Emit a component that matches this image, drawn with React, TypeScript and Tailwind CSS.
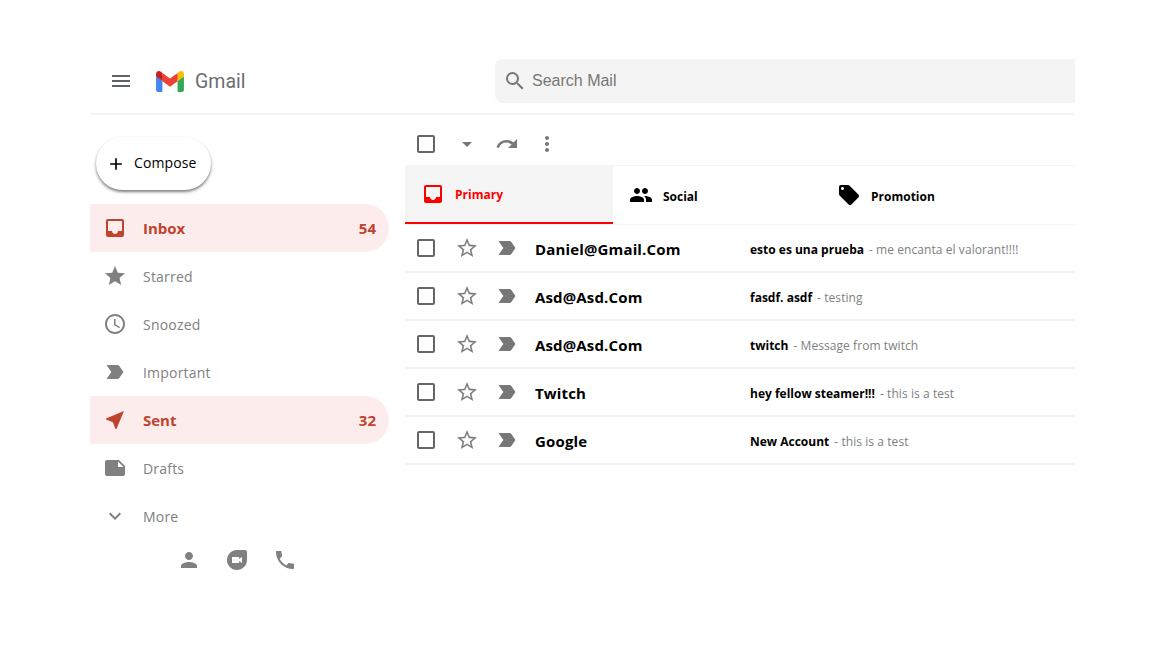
import type { ReactNode } from "react"
import {
  MdAccessTime,
  MdAdd,
  MdArrowDropDown,
  MdCheckBoxOutlineBlank,
  MdDuo,
  MdExpandMore,
  MdInbox,
  MdLabelImportant,
  MdLocalOffer,
  MdMenu,
  MdMoreVert,
  MdNearMe,
  MdNote,
  MdPeople,
  MdPerson,
  MdPhone,
  MdRedo,
  MdSearch,
  MdStar,
  MdStarBorder,
} from "react-icons/md"

function GmailLogo() {
  return (
    <svg viewBox="0 0 256 193" className="h-[21px] w-[28px]">
      <path fill="#4285F4" d="M58.182 192.05V93.14L27.507 65.077 0 49.504v125.091c0 9.658 7.825 17.455 17.455 17.455h40.727Z" />
      <path fill="#34A853" d="M197.818 192.05h40.727c9.659 0 17.455-7.826 17.455-17.455V49.505l-31.156 17.837-27.026 25.798v98.91Z" />
      <path fill="#EA4335" d="m58.182 93.14-4.174-38.647 4.174-36.989L128 69.868l69.818-52.364 4.669 34.992-4.669 40.644L128 145.504z" />
      <path fill="#FBBC04" d="M197.818 17.504V93.14L256 49.504V26.231c0-21.585-24.64-33.89-41.89-20.945l-16.292 12.218Z" />
      <path fill="#C5221F" d="M0 49.504l26.759 20.07L58.182 93.14V17.504L41.89 5.286C24.61-7.66 0 4.646 0 26.23v23.273Z" />
    </svg>
  )
}

type NavItem = { icon: ReactNode; label: string; count?: number; active?: boolean }

const navItems: NavItem[] = [
  { icon: <MdInbox />, label: "Inbox", count: 54, active: true },
  { icon: <MdStar />, label: "Starred" },
  { icon: <MdAccessTime />, label: "Snoozed" },
  { icon: <MdLabelImportant />, label: "Important" },
  { icon: <MdNearMe />, label: "Sent", count: 32, active: true },
  { icon: <MdNote />, label: "Drafts" },
  { icon: <MdExpandMore />, label: "More" },
]

const mails = [
  { from: "Daniel@Gmail.Com", subject: "esto es una prueba", body: "me encanta el valorant!!!!" },
  { from: "Asd@Asd.Com", subject: "fasdf. asdf", body: "testing" },
  { from: "Asd@Asd.Com", subject: "twitch", body: "Message from twitch" },
  { from: "Twitch", subject: "hey fellow steamer!!!", body: "this is a test" },
  { from: "Google", subject: "New Account", body: "this is a test" },
]

function SidebarRow({ icon, label, count, active }: NavItem) {
  return (
    <div
      className={
        active
          ? "flex h-12 items-center rounded-r-3xl bg-[#fcecec] pl-[13px] pr-[13px] text-[#c0432f]"
          : "flex h-12 items-center rounded-r-3xl pl-[13px] pr-[13px] text-[#808080]"
      }
    >
      <span className="text-[24px]">{icon}</span>
      <span className={active ? "ml-[16px] flex-1 text-[15px] font-bold" : "ml-[16px] flex-1 text-[14px] tracking-[0.2px]"}>{label}</span>
      {count !== undefined && <span className="text-[15px] font-bold">{count}</span>}
    </div>
  )
}

function Sidebar() {
  return (
    <aside className="w-[299px] shrink-0">
      <button className="ml-[6px] mt-[22px] mb-[14px] flex h-[53px] w-[115px] items-center rounded-full bg-white pl-[10px] text-[14px] text-black shadow-[0_2px_3px_rgba(0,0,0,0.5)]">
        <MdAdd className="text-[20px]" />
        <span className="ml-[8px] pb-[2px] tracking-[0.1px]">Compose</span>
      </button>
      {navItems.map((item) => (
        <SidebarRow key={item.label} {...item} />
      ))}
      <div className="flex items-center gap-[24px] pl-[87px] pt-[8px] text-[24px] text-[#808080]">
        <MdPerson />
        <MdDuo />
        <MdPhone />
      </div>
    </aside>
  )
}

function Tab({ icon, label, active }: { icon: ReactNode; label: string; active?: boolean }) {
  return (
    <div
      className={
        active
          ? "flex h-[59px] w-[208px] items-center border-b-2 border-[#ff0000] bg-[#f5f5f5] pl-[16px] text-[#ff0000]"
          : "flex h-[59px] w-[208px] items-center pl-[16px] pt-[1px] text-black"
      }
    >
      <span className="text-[24px]">{icon}</span>
      <span className="ml-[10px] pt-[3px] text-[12px] font-bold">{label}</span>
    </div>
  )
}

function MailRow({ from, subject, body }: { from: string; subject: string; body: string }) {
  return (
    <div className="flex h-12 items-center border-b-2 border-[#f2f2f2] pl-[9px]">
      <MdCheckBoxOutlineBlank className="text-[24px] text-[#666666]" />
      <MdStarBorder className="ml-[17px] text-[24px] text-[#808080]" />
      <MdLabelImportant className="ml-[16px] text-[24px] text-[#777777]" />
      <span className="ml-[16px] w-[215px] pt-[2px] text-[15px] font-bold tracking-[0.15px] text-black">{from}</span>
      <span className="pt-[3px] text-[12px] font-bold text-black">{subject}</span>
      <span className="ml-[5px] pt-[3px] text-[12px] tracking-[0.07px] text-[#808080]">- {body}</span>
    </div>
  )
}

export default function App() {
  return (
    <div className="min-h-screen bg-white pl-[90px] pr-[77px] pt-[59px] font-['Open_Sans',sans-serif]">
      <header className="flex h-[56px] items-start border-b-2 border-[#f4f4f4]">
        <div className="flex h-[44px] w-[405px] items-center pl-[19px]">
          <MdMenu className="text-[24px] text-[#5f6368]" />
          <span className="ml-[23px]"><GmailLogo /></span>
          <span className="ml-[11px] pt-[2px] font-['Roboto',sans-serif] text-[19.5px] text-[#6b6e72]">Gmail</span>
        </div>
        <div className="flex h-[44px] flex-1 items-center rounded-l-lg bg-[#f4f4f4] pl-[8px]">
          <MdSearch className="text-[24px] text-[#777777]" />
          <span className="ml-[5px] font-['Liberation_Sans',sans-serif] text-[16px] text-[#777777]">Search Mail</span>
        </div>
      </header>
      <div className="flex">
        <Sidebar />
        <main className="ml-[16px] flex-1">
          <div className="flex h-[50px] items-center pl-[9px] pt-[8px] text-[24px] text-[#777777]">
            <MdCheckBoxOutlineBlank className="text-[#666666]" />
            <MdArrowDropDown className="ml-[17px]" />
            <MdRedo className="ml-[16px]" />
            <MdMoreVert className="ml-[16px]" />
          </div>
          <div className="flex border-b border-[#f4f4f4] shadow-[inset_0_1px_0_#f4f4f4]">
            <Tab icon={<MdInbox />} label="Primary" active />
            <Tab icon={<MdPeople />} label="Social" />
            <Tab icon={<MdLocalOffer />} label="Promotion" />
          </div>
          {mails.map((mail, i) => (
            <MailRow key={i} {...mail} />
          ))}
        </main>
      </div>
    </div>
  )
}
